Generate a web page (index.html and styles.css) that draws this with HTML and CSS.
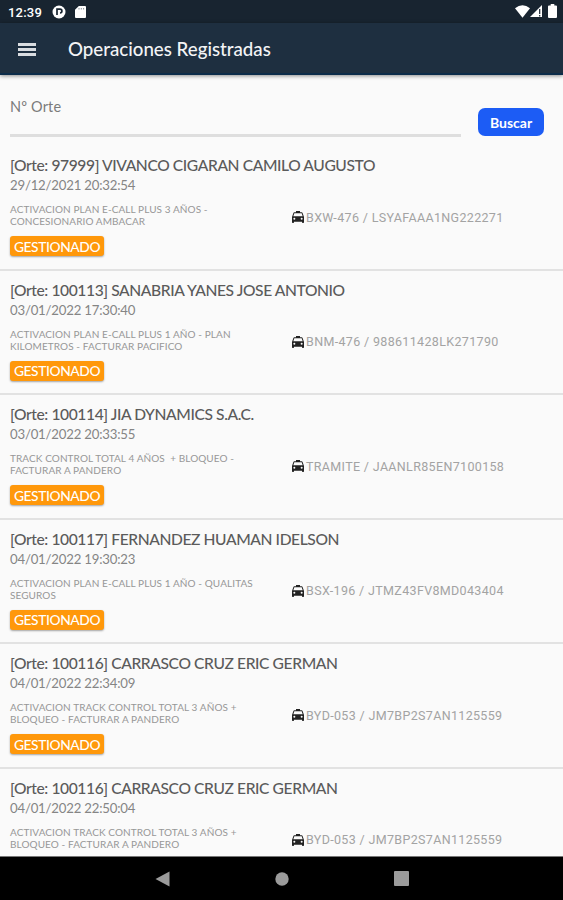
FILE: index.html
```html
<!DOCTYPE html>
<html lang="es">
<head>
  <title>Operaciones Registradas</title>
  <meta charset="utf-8">
  <meta name="viewport" content="width=device-width, initial-scale=1">
  <link rel="stylesheet" href="styles.css">
</head>
<body>
  <svg class="sprite" aria-hidden="true">
    <symbol id="taxi" viewBox="0 0 24 24">
      <path fill-rule="evenodd" d="M18.9 6C18.7 5.4 18.1 5 17.5 5H15V3H9v2H6.500c-.66 0-1.210.42-1.420 1.010L3 12v8c0 .55.45 1 1 1h1c.55 0 1-.45 1-1v-1h12v1c0 .55.45 1 1 1h1c.55 0 1-.45 1-1v-8zM6.500 16a1.500 1.500 0 1 1 0-3 1.500 1.500 0 0 1 0 3zm11 0a1.500 1.500 0 1 1 0-3 1.500 1.500 0 0 1 0 3zM5 11l1.500-4.500h11L19 11z"/>
    </symbol>
  </svg>

  <div class="screen">
    <div class="status-bar">
      <span class="clock">12:39</span>
      <svg class="status-app" width="14" height="14" viewBox="0 0 14 14">
        <circle cx="7" cy="7" r="6.500" fill="#fff"/>
        <path d="M5 10V4.200h3a1.900 1.900 0 0 1 0 3.800" fill="none" stroke="#182430" stroke-width="1.700"/>
      </svg>
      <svg class="status-card" width="11" height="12" viewBox="0 0 11 12">
        <path d="M3.800 0H10a1 1 0 0 1 1 1v10a1 1 0 0 1-1 1H1a1 1 0 0 1-1-1V3.800z" fill="#fff"/>
        <path d="M4 2v1.500M6.300 2v1.500M8.600 2v1.500" stroke="#8b9299"/>
      </svg>
      <div class="status-right">
        <svg width="15" height="13" viewBox="0 0 15 13">
          <path d="M0 3.200Q7.500-2.600 15 3.200L7.500 12.700z" fill="#fff"/>
        </svg>
        <svg width="12" height="12" viewBox="0 0 12 12">
          <path d="M12 0v12H0z" fill="#fff"/>
          <path d="M9.700 4v5M9.700 10v1.500" stroke="#182430" stroke-width="1.200"/>
        </svg>
        <svg class="battery" width="9" height="14" viewBox="0 0 9 14">
          <path d="M2.700 0h3.600v1.500H8a1 1 0 0 1 1 1V13a1 1 0 0 1-1 1H1a1 1 0 0 1-1-1V2.500a1 1 0 0 1 1-1h1.700z" fill="#fff"/>
        </svg>
      </div>
    </div>

    <header class="toolbar">
      <button class="menu" aria-label="Menú"><span></span><span></span><span></span></button>
      <h1>Operaciones Registradas</h1>
    </header>

    <main class="content">
      <form class="search">
        <label class="field">Nº Orte</label>
        <button class="search-button" type="button">Buscar</button>
      </form>

      <ul class="orders">
        <li class="order">
          <h2>[Orte: 97999] VIVANCO CIGARAN CAMILO AUGUSTO</h2>
          <time>29/12/2021 20:32:54</time>
          <div class="details">
            <p class="plan">ACTIVACION PLAN E-CALL PLUS 3 AÑOS -<br>CONCESIONARIO AMBACAR</p>
            <p class="vehicle"><svg class="taxi"><use href="#taxi"/></svg><span>BXW-476 / LSYAFAAA1NG222271</span></p>
          </div>
          <span class="badge">GESTIONADO</span>
        </li>
        <li class="order">
          <h2>[Orte: 100113] SANABRIA YANES JOSE ANTONIO</h2>
          <time>03/01/2022 17:30:40</time>
          <div class="details">
            <p class="plan">ACTIVACION PLAN E-CALL PLUS 1 AÑO - PLAN<br>KILOMETROS - FACTURAR PACIFICO</p>
            <p class="vehicle"><svg class="taxi"><use href="#taxi"/></svg><span>BNM-476 / 988611428LK271790</span></p>
          </div>
          <span class="badge">GESTIONADO</span>
        </li>
        <li class="order">
          <h2>[Orte: 100114] JIA DYNAMICS S.A.C.</h2>
          <time>03/01/2022 20:33:55</time>
          <div class="details">
            <p class="plan">TRACK CONTROL TOTAL 4 AÑOS &nbsp;+ BLOQUEO -<br>FACTURAR A PANDERO</p>
            <p class="vehicle"><svg class="taxi"><use href="#taxi"/></svg><span>TRAMITE / JAANLR85EN7100158</span></p>
          </div>
          <span class="badge">GESTIONADO</span>
        </li>
        <li class="order">
          <h2>[Orte: 100117] FERNANDEZ HUAMAN IDELSON</h2>
          <time>04/01/2022 19:30:23</time>
          <div class="details">
            <p class="plan">ACTIVACION PLAN E-CALL PLUS 1 AÑO - QUALITAS<br>SEGUROS</p>
            <p class="vehicle"><svg class="taxi"><use href="#taxi"/></svg><span>BSX-196 / JTMZ43FV8MD043404</span></p>
          </div>
          <span class="badge">GESTIONADO</span>
        </li>
        <li class="order">
          <h2>[Orte: 100116] CARRASCO CRUZ ERIC GERMAN</h2>
          <time>04/01/2022 22:34:09</time>
          <div class="details">
            <p class="plan">ACTIVACION TRACK CONTROL TOTAL 3 AÑOS +<br>BLOQUEO - FACTURAR A PANDERO</p>
            <p class="vehicle"><svg class="taxi"><use href="#taxi"/></svg><span>BYD-053 / JM7BP2S7AN1125559</span></p>
          </div>
          <span class="badge">GESTIONADO</span>
        </li>
        <li class="order">
          <h2>[Orte: 100116] CARRASCO CRUZ ERIC GERMAN</h2>
          <time>04/01/2022 22:50:04</time>
          <div class="details">
            <p class="plan">ACTIVACION TRACK CONTROL TOTAL 3 AÑOS +<br>BLOQUEO - FACTURAR A PANDERO</p>
            <p class="vehicle"><svg class="taxi"><use href="#taxi"/></svg><span>BYD-053 / JM7BP2S7AN1125559</span></p>
          </div>
        </li>
      </ul>
    </main>

    <nav class="system-nav">
      <svg width="15" height="16" viewBox="0 0 15 16"><path d="M14.500.5v15L.5 8z" fill="#9b9b9b"/></svg>
      <svg width="14" height="14" viewBox="0 0 14 14"><circle cx="7" cy="7" r="6.700" fill="#9b9b9b"/></svg>
      <svg width="15" height="15" viewBox="0 0 15 15"><rect width="15" height="15" rx="1" fill="#9b9b9b"/></svg>
    </nav>
  </div>
</body>
</html>
```
FILE: styles.css
```css
*, *::before, *::after {
  margin: 0;
  padding: 0;
  box-sizing: border-box;
}

body {
  background-color: #fafafa;
  font-family: "Lato", sans-serif;
}

button {
  border: none;
  font-family: inherit;
}

.sprite {
  display: none;
}

.screen {
  display: flex;
  flex-direction: column;
  height: 900px;
  overflow: hidden;
}

.status-bar {
  display: flex;
  align-items: center;
  flex-shrink: 0;
  height: 23px;
  padding: 1px 6px 0 8px;
  background-color: #182430;
  color: #ffffff;
}

.clock {
  width: 44px;
  font-family: "Roboto", sans-serif;
  font-size: 13px;
  font-weight: 500;
  letter-spacing: 0.2px;
}

.status-card {
  margin-left: 9px;
}

.status-right {
  display: flex;
  align-items: center;
  margin-left: auto;
  margin-top: -2px;
}

.battery {
  margin-left: 6px;
}

.toolbar {
  display: flex;
  align-items: center;
  flex-shrink: 0;
  height: 52px;
  padding: 2px 18px 0;
  border-bottom: 2px solid #0c2c4a;
  background-color: #1e2f40;
  box-shadow: 0 1px 4px rgba(0, 0, 0, 0.45);
  color: #f3f4f6;
  z-index: 1;
}

.toolbar h1 {
  margin-left: 32px;
  font-size: 18.7px;
  font-weight: 500;
}

.menu {
  display: flex;
  flex-direction: column;
  gap: 2px;
  width: 18px;
  background: none;
}

.menu span {
  height: 3px;
  background-color: #d9dce0;
}

.content {
  flex: 1;
  min-height: 0;
  overflow: hidden;
}

.search {
  display: flex;
  align-items: flex-start;
  height: 71px;
  padding: 0 19px 0 10px;
}

.field {
  width: 451px;
  height: 62px;
  padding-top: 23px;
  border-bottom: 3px solid #dedede;
  color: #7b7b7b;
  font-size: 14.5px;
  line-height: 18px;
  letter-spacing: 0.15px;
}

.search-button {
  width: 66px;
  height: 28px;
  margin: 33px 0 0 auto;
  border-radius: 7px;
  background-color: #1c5cf5;
  color: #ffffff;
  font-size: 14px;
  font-weight: 700;
}

.orders {
  list-style: none;
}

.order {
  height: 124.6px;
  padding: 9px 10px 0;
  border-bottom: 2px solid #e2e2e2;
}

.order h2 {
  color: #5b5b5b;
  font-size: 15.6px;
  font-weight: 500;
  line-height: 20px;
  letter-spacing: -0.4px;
  white-space: nowrap;
}

.order time {
  display: block;
  color: #858585;
  font-size: 13.2px;
  line-height: 20px;
  letter-spacing: -0.2px;
}

.details {
  display: grid;
  grid-template-columns: 280px 1fr;
  margin-top: 8px;
}

.plan {
  color: #979797;
  font-size: 10px;
  line-height: 12px;
  letter-spacing: 0.09px;
  white-space: nowrap;
}

.vehicle {
  display: flex;
  align-items: center;
  height: 28px;
  color: #a3a3a3;
  font-family: "Roboto", sans-serif;
  font-size: 12.5px;
  letter-spacing: 0.34px;
  white-space: nowrap;
}

.taxi {
  width: 16px;
  height: 16px;
  fill: #222222;
}

.badge {
  display: flex;
  align-items: center;
  justify-content: center;
  width: 94px;
  height: 20px;
  margin-top: 5px;
  border-radius: 3px;
  background-color: #ff980b;
  box-shadow: 0 1px 2px rgba(0, 0, 0, 0.35);
  color: #ffffff;
  font-size: 13.8px;
  font-weight: 500;
  letter-spacing: -0.4px;
}

.system-nav {
  display: flex;
  align-items: center;
  justify-content: center;
  gap: 105px;
  flex-shrink: 0;
  height: 44px;
  border-top: 1px solid #777777;
  background-color: #000000;
}
```
